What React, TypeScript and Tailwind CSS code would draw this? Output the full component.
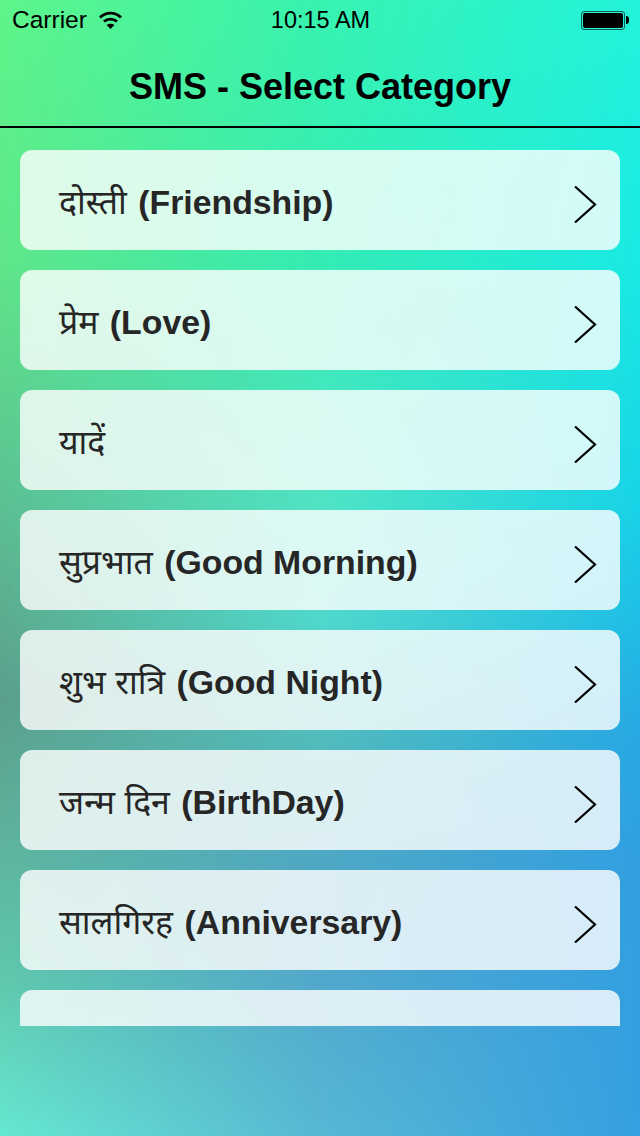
import React from 'react';

const categories = [
  { hindi: 'दोस्ती', english: '(Friendship)' },
  { hindi: 'प्रेम', english: '(Love)' },
  { hindi: 'यादें', english: '' },
  { hindi: 'सुप्रभात', english: '(Good Morning)' },
  { hindi: 'शुभ रात्रि', english: '(Good Night)' },
  { hindi: 'जन्म दिन', english: '(BirthDay)' },
  { hindi: 'सालगिरह', english: '(Anniversary)' },
  { hindi: '', english: '' },
];

const WifiIcon = () => (
  <svg width="23" height="18" viewBox="0 0 23 18" fill="none" stroke="#000">
    <path d="M1 6.5C6.8 0.6 16.2 0.6 22 6.5" strokeWidth="2.8" />
    <path d="M5 10.6C8.6 7.2 14.4 7.2 18 10.6" strokeWidth="2.8" />
    <path d="M11.5 18L7.6 14C9.8 12.2 13.2 12.2 15.4 14Z" fill="#000" stroke="none" />
  </svg>
);

const Chevron = () => (
  <svg width="23" height="37" viewBox="0 0 23 37" fill="none" stroke="#000" strokeWidth="2.2" className="shrink-0 mt-2">
    <path d="M1 0.5L21 18.5L1 36.5" />
  </svg>
);

const StatusBar = () => (
  <div className="h-10 grid grid-cols-3 items-center pl-3 pr-[11px] text-black">
    <div className="flex items-center gap-3 text-[24.5px]">
      <span>Carrier</span>
      <WifiIcon />
    </div>
    <div className="text-center whitespace-nowrap text-[23.5px] pt-[2px]">10:15 AM</div>
    <div className="flex justify-end items-center">
      <div className="w-[44px] h-[19px] border border-black/60 rounded-[3px] p-[1px]">
        <div className="w-full h-full bg-black rounded-[2px]" />
      </div>
      <div className="w-[3px] h-[8px] bg-black rounded-r-full ml-[1px]" />
    </div>
  </div>
);

export default function App() {
  return (
    <div className="relative w-[640px] h-[1136px] overflow-hidden font-['Liberation_Sans','Noto_Sans',sans-serif] bg-[linear-gradient(to_bottom,#24f4dc_0px,#1aeae4_260px,#18d4e8_500px,#28a8e4_740px,#32a0e2_860px,#35a0e0_1136px)]">
      {/* backdrop: the wallpaper blends three vertical colour columns */}
      <div className="absolute inset-0 bg-[linear-gradient(to_bottom,#38f3b0_0px,#35ecb4_260px,#50e4c4_500px,#50d8cc_620px,#52bcbc_740px,#4fa8c4_860px,#52a8cc_980px,#58b8d4_1136px)] [mask-image:linear-gradient(to_right,#000_50%,transparent_100%)]" />
      <div className="absolute inset-0 bg-[linear-gradient(to_bottom,#5ef58a_0px,#60e688_260px,#5cc092_500px,#5b9e8c_700px,#60c8ac_980px,#66e8d0_1136px)] [mask-image:linear-gradient(to_right,#000_0%,transparent_50%)]" />
      <div className="relative flex flex-col h-full">
        <StatusBar />
        <header className="h-[88px] border-b-2 border-black flex items-center justify-center pt-2">
          <h1 className="text-[36px] font-bold text-black leading-none">SMS - Select Category</h1>
        </header>
        <div className="h-[898px] overflow-hidden px-5 pt-[22px] flex flex-col gap-5">
          {categories.map((item, i) => (
            <div
              key={i}
              className="h-[100px] shrink-0 rounded-xl bg-white/80 flex items-center justify-between pl-[39px] pr-[23px]"
            >
              <span className="text-[33.8px] text-[#262626] whitespace-nowrap pt-1">
                {item.hindi} <span className="font-bold ml-[2px]">{item.english}</span>
              </span>
              {item.hindi && <Chevron />}
            </div>
          ))}
        </div>
      </div>
    </div>
  );
}
